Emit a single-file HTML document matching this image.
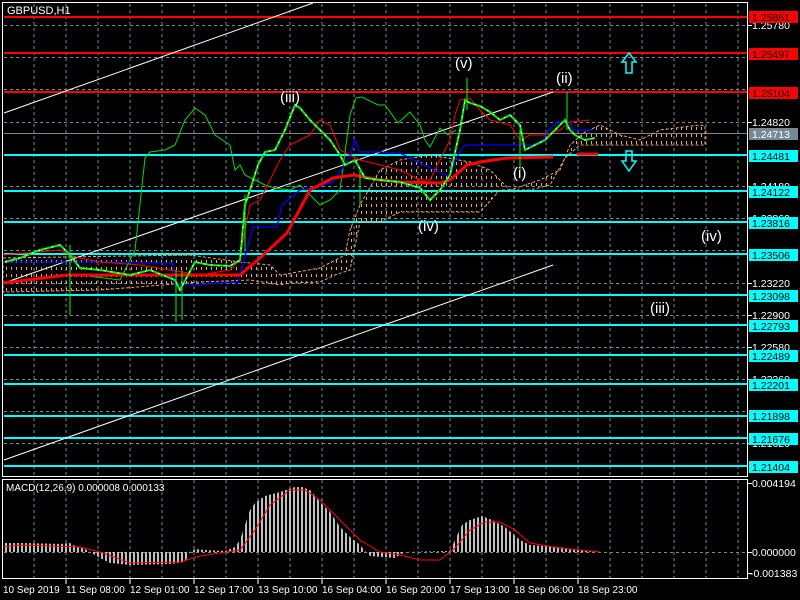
<!DOCTYPE html>
<html><head><meta charset="utf-8"><style>
html,body{margin:0;padding:0;background:#000;width:800px;height:600px;overflow:hidden}
svg{display:block;font-family:"Liberation Sans",sans-serif}
</style></head><body>
<svg width="800" height="600" viewBox="0 0 800 600" xmlns="http://www.w3.org/2000/svg">
<defs>
<pattern id="cl" width="5" height="7" patternUnits="userSpaceOnUse"><rect x="1" y="1" width="1" height="3" fill="#f4a460"/></pattern>
<pattern id="hb" width="4" height="10" patternUnits="userSpaceOnUse"><rect x="1" y="0" width="2" height="10" fill="#c0c0c0"/></pattern>
</defs>
<rect width="800" height="600" fill="#000"/>
<g stroke="#778899" stroke-width="1" stroke-dasharray="3,3">
<path d="M34 4V476M66 4V476M98 4V476M130 4V476M162 4V476M194 4V476M226 4V476M258 4V476M290 4V476M322 4V476M354 4V476M386 4V476M418 4V476M450 4V476M482 4V476M514 4V476M546 4V476M578 4V476M610 4V476M642 4V476M674 4V476M706 4V476M738 4V476"/>
<path d="M34 480V578M66 480V578M98 480V578M130 480V578M162 480V578M194 480V578M226 480V578M258 480V578M290 480V578M322 480V578M354 480V578M386 480V578M418 480V578M450 480V578M482 480V578M514 480V578M546 480V578M578 480V578M610 480V578M642 480V578M674 480V578M706 480V578M738 480V578"/>
<path d="M4 25.5H747M4 57.5H747M4 89.5H747M4 122.5H747M4 154.5H747M4 186.5H747M4 218.5H747M4 250.5H747M4 283.5H747M4 315.5H747M4 347.5H747M4 379.5H747M4 411.5H747M4 443.5H747M4 552.5H747"/>
</g>
<g stroke="#ff0000" stroke-width="2"><path d="M4 17H747M4 53H747M4 92H747"/></g>
<path d="M4 133.5H747" stroke="#808080" stroke-width="1"/>
<g stroke="#00ffff" stroke-width="2"><path d="M4 155H747M4 191H747M4 222H747M4 254H747M4 295H747M4 325H747M4 355H747M4 384H747M4 416H747M4 438H747M4 466H747"/></g>
<polygon fill="url(#cl)" stroke="#f4a460" stroke-dasharray="3,2" stroke-width="1" points="3,258 190,255 240,262 270,265 280,275 320,268 345,255 350,230 360,205 380,170 400,160 430,155 470,162 490,170 510,190 540,180 560,170 570,145 585,132 600,125 620,135 640,140 660,130 700,125 705,126 705,145 660,145 620,145 600,145 580,145 565,158 550,185 530,190 500,190 480,212 440,212 400,212 380,222 360,222 350,270 335,275 320,282 290,283 280,285 250,280 200,282 100,290 3,292"/>
<g stroke="#fff" stroke-width="1" fill="none">
<path d="M4 113L313 3"/><path d="M4 283L553 92"/><path d="M4 460L553 265"/>
</g>
<polyline fill="none" stroke="#00dd00" stroke-width="1" points="3,282 40,278 80,275 120,280 135,250 145,158 150,152 165,150 175,145 185,120 195,108 205,115 215,135 230,145 235,170 240,165 245,175 255,180 265,185 275,188 290,190 300,185 310,195 320,205 330,200 340,190 350,115 356,98 362,97 378,105 385,105 398,123 410,112 420,125 425,140 430,147 440,128 448,135 456,130"/>
<polyline fill="none" stroke="#0000ff" stroke-width="1.3" points="3,262 100,262 173,263 173,283 190,285 238,282 253,227 277,227 282,205 300,190 317,187 333,182 350,157 355,140 360,152 380,152 400,153 420,163 450,177 455,160 463,147 467,145 533,145 543,140 547,132 557,122 570,122 573,130 593,130"/>
<polyline fill="none" stroke="#ff0000" stroke-width="1" points="3,255 60,250 70,255 80,258 100,262 140,265 170,270 200,275 230,270 240,260 245,230 250,205 260,200 270,180 280,160 290,145 300,140 310,135 320,120 330,125 340,150 350,155 360,160 380,165 400,170 420,180 430,180 440,160 450,140 455,115 460,100 470,98 480,110 490,120 510,125 520,140 530,135 545,135 560,130 570,122 590,120"/>
<polyline fill="none" stroke="#ff0000" stroke-width="3" points="3,283 67,275 240,275 260,258 287,233 310,190 333,178 353,175 380,180 400,182 440,183 450,180 467,165 480,162 507,158 553,157"/>
<path d="M577 154H598" stroke="#ff0000" stroke-width="3"/>
<polyline fill="none" stroke="#00ee00" stroke-width="2" points="5,262 20,258 40,250 60,245 70,255 80,268 100,270 130,275 150,270 175,280 180,290 195,262 210,265 230,266 240,260 245,205 250,190 258,165 265,152 275,150 285,130 295,105 300,108 310,120 320,130 330,140 340,155 345,165 355,160 365,178 380,180 400,182 420,188 430,200 440,190 450,175 460,130 465,100 470,103 480,106 490,112 500,120 510,115 520,125 525,150 535,145 545,140 555,130 565,120 570,130 575,135 585,140 595,138"/>
<polyline fill="none" stroke="#fff" stroke-width="1" stroke-dasharray="2,5" points="5,262 20,258 40,250 60,245 70,255 80,268 100,270 130,275 150,270 175,280 180,290 195,262 210,265 230,266 240,260 245,205 250,190 258,165 265,152 275,150 285,130 295,105 300,108 310,120 320,130 330,140 340,155 345,165 355,160 365,178 380,180 400,182 420,188 430,200 440,190 450,175 460,130 465,100 470,103 480,106 490,112 500,120 510,115 520,125 525,150 535,145 545,140 555,130 565,120 570,130 575,135 585,140 595,138"/>
<g stroke="#00ff00" stroke-width="1"><path d="M70 245V315M176 270V322M182 270V320M360 170V205M467 78V110M567 92V130M520 130V170M245 195V250"/></g>
<g fill="#fff" font-size="15">
<text x="280" y="102">(iii)</text><text x="455" y="68">(v)</text><text x="556" y="83">(ii)</text>
<text x="513" y="178">(i)</text><text x="418" y="231">(iv)</text><text x="701" y="241">(iv)</text><text x="650" y="313">(iii)</text>
</g>
<path d="M622 62L629 53L636 62H632V73H626V62Z" fill="none" stroke="#00ffff" stroke-width="1.5"/>
<path d="M622 161L629 171L636 161H632V151H626V161Z" fill="none" stroke="#00ffff" stroke-width="1.5"/>
<text x="7" y="14" fill="#fff" font-size="11">GBPUSD,H1</text>
<polygon fill="url(#hb)" points="3,552 3,543 25,543 60,544 70,543 75,546 85,549 90,552 100,558 110,563 130,565 170,564 185,562 190,552 195,549 205,550 225,551 235,547 240,540 245,525 250,510 255,503 265,496 280,492 295,487 302,487 310,490 320,502 330,512 340,527 350,537 360,545 366,552 370,556 395,558 405,552 450,551 455,540 462,525 470,520 482,516 492,520 505,527 520,540 530,545 560,547 580,550 600,552"/>
<polyline fill="none" stroke="#ff0000" stroke-width="1" points="3,547 20,545 80,547 100,552 130,563 180,562 200,556 220,553 240,550 255,530 270,505 290,490 305,490 320,500 340,520 360,540 380,552 400,555 420,560 440,560 455,548 470,530 485,522 500,522 515,530 530,543 560,548 600,552"/>
<text x="6" y="491" fill="#fff" font-size="10">MACD(12,26,9) 0.000008 0.000133</text>
<rect x="2.5" y="2.5" width="745" height="474" fill="none" stroke="#fff"/>
<rect x="2.5" y="479.5" width="745" height="99" fill="none" stroke="#fff"/>
<g stroke="#fff"><path d="M748 25.5H752M748 122.5H752M748 186.5H752M748 218.5H752M748 283.5H752M748 315.5H752M748 347.5H752M748 379.5H752M748 443.5H752M748 483.5H752M748 552.5H752M748 573.5H752"/>
<path d="M66 579V584M130 579V584M194 579V584M258 579V584M322 579V584M386 579V584M450 579V584M514 579V584M578 579V584"/></g>
<g fill="#fff" font-size="10.5">
<text x="752" y="29">1.25780</text><text x="752" y="126">1.24820</text><text x="752" y="190">1.24180</text><text x="752" y="222">1.23860</text>
<text x="752" y="287">1.23220</text><text x="752" y="319">1.22900</text><text x="752" y="351">1.22580</text><text x="752" y="383">1.22260</text><text x="752" y="447">1.21620</text>
<text x="752" y="487">0.004194</text><text x="752" y="556">0.000000</text><text x="750" y="577">-0.001383</text>
</g>
<g font-size="10.5">
<rect x="749" y="11" width="49" height="12" fill="#ff0000"/><text x="752" y="21" fill="#000">1.25861</text>
<rect x="749" y="48" width="49" height="12" fill="#ff0000"/><text x="752" y="58" fill="#000">1.25497</text>
<rect x="749" y="87" width="49" height="12" fill="#ff0000"/><text x="752" y="97" fill="#000">1.25104</text>
<rect x="749" y="128" width="49" height="12" fill="#778899"/><text x="752" y="138" fill="#fff">1.24713</text>
<rect x="749" y="150" width="49" height="12" fill="#00ffff"/><text x="752" y="160" fill="#000">1.24481</text>
<rect x="749" y="186" width="49" height="12" fill="#00ffff"/><text x="752" y="196" fill="#000">1.24122</text>
<rect x="749" y="217" width="49" height="12" fill="#00ffff"/><text x="752" y="227" fill="#000">1.23816</text>
<rect x="749" y="249" width="49" height="12" fill="#00ffff"/><text x="752" y="259" fill="#000">1.23506</text>
<rect x="749" y="290" width="49" height="12" fill="#00ffff"/><text x="752" y="300" fill="#000">1.23098</text>
<rect x="749" y="320" width="49" height="12" fill="#00ffff"/><text x="752" y="330" fill="#000">1.22793</text>
<rect x="749" y="350" width="49" height="12" fill="#00ffff"/><text x="752" y="360" fill="#000">1.22489</text>
<rect x="749" y="379" width="49" height="12" fill="#00ffff"/><text x="752" y="389" fill="#000">1.22201</text>
<rect x="749" y="410" width="49" height="12" fill="#00ffff"/><text x="752" y="420" fill="#000">1.21898</text>
<rect x="749" y="433" width="49" height="12" fill="#00ffff"/><text x="752" y="443" fill="#000">1.21676</text>
<rect x="749" y="461" width="49" height="12" fill="#00ffff"/><text x="752" y="471" fill="#000">1.21404</text>
</g>
<g fill="#fff" font-size="10">
<text x="3" y="593">10 Sep 2019</text><text x="66" y="593">11 Sep 08:00</text><text x="130" y="593">12 Sep 01:00</text>
<text x="194" y="593">12 Sep 17:00</text><text x="258" y="593">13 Sep 10:00</text><text x="322" y="593">16 Sep 04:00</text>
<text x="386" y="593">16 Sep 20:00</text><text x="450" y="593">17 Sep 13:00</text><text x="514" y="593">18 Sep 06:00</text><text x="578" y="593">18 Sep 23:00</text>
</g>
</svg>
</body></html>
